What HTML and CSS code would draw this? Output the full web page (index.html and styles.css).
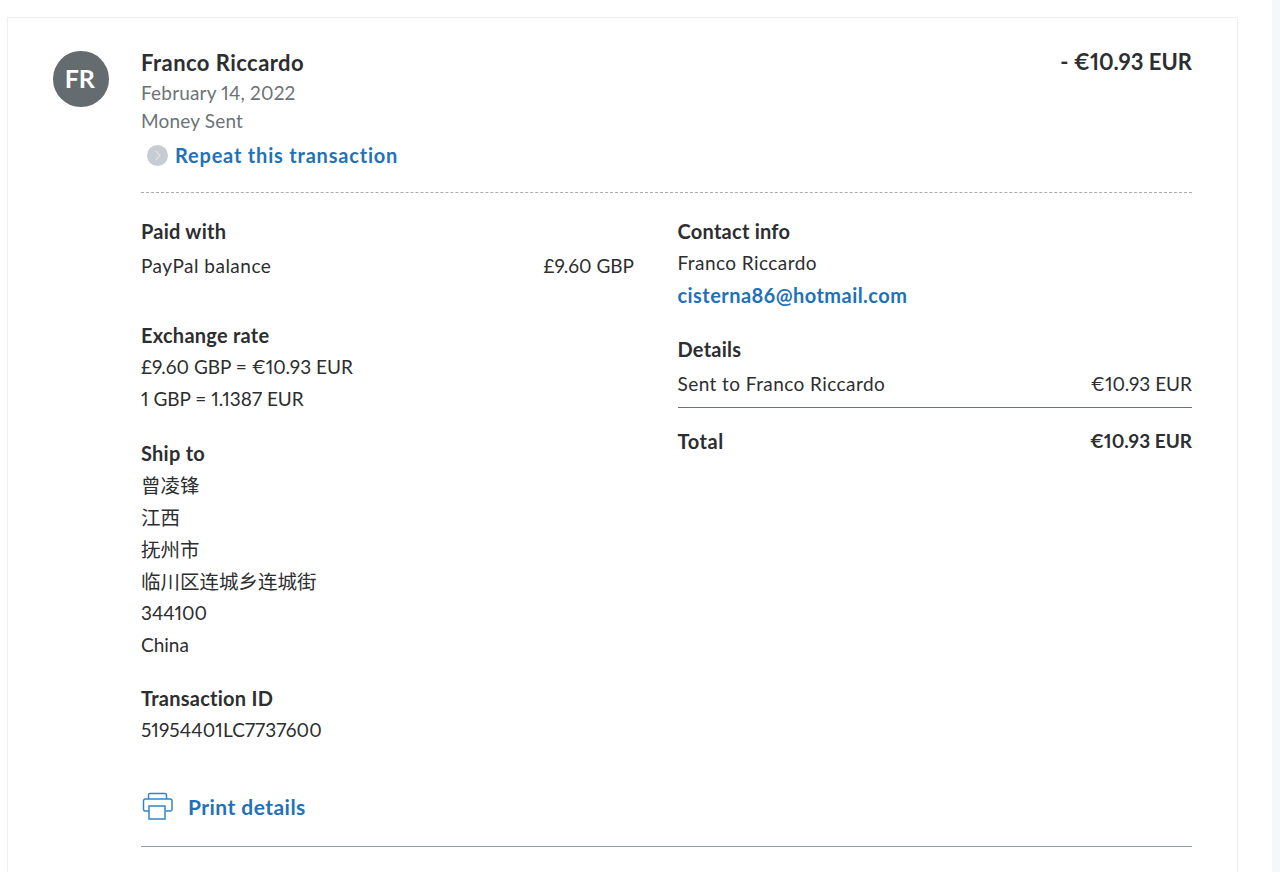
FILE: index.html
```html
<!DOCTYPE html>
<html lang="en">
<head>
<meta charset="utf-8">
<title>Transaction details</title>
<link rel="stylesheet" href="styles.css">
</head>
<body>
<div class="page">
  <main class="content">
    <article class="card">
      <div class="avatar">FR</div>
      <div class="body">
        <header class="head">
          <div>
            <div class="name">Franco Riccardo</div>
            <div class="meta date">February 14, 2022</div>
            <div class="meta">Money Sent</div>
            <a class="repeat" href="#">
              <svg class="chev" width="21" height="21" viewBox="0 0 21 21"><circle cx="10.5" cy="10.5" r="10.5" fill="#c5ccd3"/><path d="M8.5 6l4.5 4.5L8.5 15" fill="none" stroke="#d9dee3" stroke-width="1.5"/></svg>
              <span>Repeat this transaction</span>
            </a>
          </div>
          <div class="amount">- €10.93 EUR</div>
        </header>
        <div class="columns">
          <div class="left">
            <section class="sec paid">
              <h3>Paid with</h3>
              <div class="row paid-row"><span>PayPal balance</span><span>£9.60 GBP</span></div>
            </section>
            <section class="sec">
              <h3>Exchange rate</h3>
              <p>£9.60 GBP = €10.93 EUR</p>
              <p>1 GBP = 1.1387 EUR</p>
            </section>
            <section class="sec ship">
              <h3>Ship to</h3>
              <p class="cjk">曾凌锋</p>
              <p class="cjk">江西</p>
              <p class="cjk">抚州市</p>
              <p class="cjk">临川区连城乡连城街</p>
              <p>344100</p>
              <p>China</p>
            </section>
            <section class="sec">
              <h3>Transaction ID</h3>
              <p class="txn">51954401LC7737600</p>
            </section>
          </div>
          <div class="right">
            <section class="sec contact">
              <h3>Contact info</h3>
              <p class="wide">Franco Riccardo</p>
              <p><a class="link" href="#">cisterna86@hotmail.com</a></p>
            </section>
            <section class="details">
              <h3>Details</h3>
              <div class="row sent"><span class="wide">Sent to Franco Riccardo</span><span>€10.93 EUR</span></div>
              <div class="row total"><span class="total-label">Total</span><span>€10.93 EUR</span></div>
            </section>
          </div>
        </div>
        <a class="print" href="#">
          <svg width="32" height="30" viewBox="0 0 32 30" fill="none" stroke="#3584c6" stroke-width="1.5"><path d="M7.5 8V4A1.500 1.500 0 0 1 9 2.500h15A1.500 1.500 0 0 1 25.500 4V8"/><path d="M8 20H4A1.800 1.800 0 0 1 2.500 18.200V10A2 2 0 0 1 4.500 8h24.500A2 2 0 0 1 31 10v8.200A1.800 1.800 0 0 1 29.500 20H24.500"/><rect x="8" y="15" width="16" height="13"/></svg>
          <span>Print details</span>
        </a>
        <hr class="rule">
      </div>
    </article>
  </main>
  <div class="scrollbar"></div>
</div>
</body>
</html>
```
FILE: styles.css
```css
* { box-sizing: border-box; }
html, body { margin: 0; height: 100%; overflow: hidden; background: #fff; }
body { font-family: Lato, "Noto Sans CJK SC", sans-serif; color: #2c2e2f; font-size: 19px; font-variant-numeric: proportional-nums; }
.page { display: flex; height: 872px; overflow: hidden; }
.content { flex: 1; padding: 17px 34px 0 7px; min-width: 0; }
.scrollbar { width: 8px; background: #f5f7fa; }
.card { display: flex; gap: 32.5px; border: 1px solid #eeeff1; padding: 33px 45px 0 45px; height: 880px; }
.avatar { flex: none; width: 55.5px; height: 55.5px; padding: 0 2px 1px 0; border-radius: 50%; background: #656c70; color: #fff; font-size: 25px; font-weight: 700; display: flex; align-items: center; justify-content: center; }
.body { flex: 1; min-width: 0; }
.head { display: flex; justify-content: space-between; align-items: flex-start; height: 142px; border-bottom: 1px dashed #a9adb0; }
.name { font-size: 22px; font-weight: 700; line-height: 24px; letter-spacing: .45px; }
.meta { color: #6c7378; line-height: 28px; letter-spacing: .18px; }
.date { margin-top: 4px; }
.repeat { display: flex; align-items: center; gap: 7px; margin: 6px 0 0 6px; color: #1f72b8; font-size: 20px; font-weight: 700; line-height: 28px; text-decoration: none; letter-spacing: .8px; }
.amount { font-size: 22px; font-weight: 700; line-height: 22px; }
.columns { display: flex; gap: 43.500px; padding-top: 23px; }
.left { width: 493px; flex: none; }
.right { flex: 1; min-width: 0; }
h3 { margin: 0; font-size: 20px; font-weight: 700; line-height: 31px; color: #2c2e2f; letter-spacing: .25px; }
p { margin: 0; line-height: 32px; }
.cjk { font-size: 19.5px; padding-top: 1px; height: 32px; line-height: 31px; }
.txn { letter-spacing: .1px; }
.sec { margin-bottom: 23px; }
.ship { margin-bottom: 22px; }
.row { display: flex; justify-content: space-between; }
.paid { margin-bottom: 35px; }
.paid-row { line-height: 38px; }
.paid-row span:first-child { letter-spacing: .5px; }
.contact { margin-bottom: 22px; }
.link { color: #1f72b8; font-size: 20px; font-weight: 700; text-decoration: none; letter-spacing: .45px; }
.wide { letter-spacing: .43px; }
.sent { line-height: 38px; height: 43px; border-bottom: 1px solid #6c7378; }
.total { font-weight: 700; line-height: 32px; margin-top: 17px; }
.total-label { font-size: 20px; letter-spacing: .6px; }
.print { display: flex; align-items: center; gap: 15px; margin-top: 22px; color: #1f72b8; font-size: 21px; font-weight: 700; text-decoration: none; letter-spacing: .45px; }
.rule { margin: 25px 0 0; border: 0; border-top: 1px solid #8f9aa2; }
```
